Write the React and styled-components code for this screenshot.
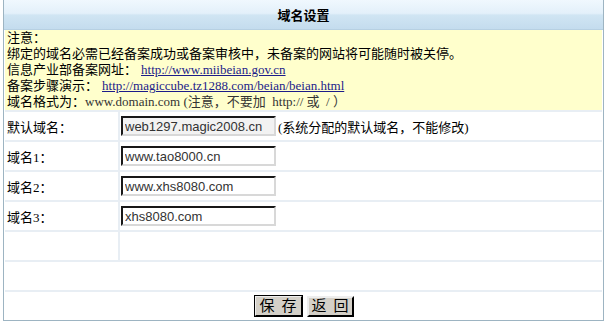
import React, { useState } from 'react'
import styled, { createGlobalStyle } from 'styled-components'

const GlobalStyle = createGlobalStyle`
    body {
        margin:0;
        background:#ffffff;
        font-family:"Liberation Serif", "Noto Sans CJK SC", serif;
        font-size:13px;
        color:#000;
    }
`

const Frame = styled.div`
    margin-left:3px;
    width:599px;
    border:1px solid #9db4c2;
    border-top:none;
    background:#fff;
`

const Header = styled.div`
    height:29px;
    border-bottom:1px solid #b7d0e2;
    background:linear-gradient(#f0f8fe 0%, #e3f0fa 46%, #d0e5f3 52%, #c4dcee 100%);
    display:flex;
    align-items:center;
    justify-content:center;
    font-family:"Noto Sans CJK SC", sans-serif;
    font-weight:bold;
    font-size:13px;
`

const Notice = styled.div`
    background:#ffffcc;
    padding:0 0 0 2px;
    line-height:16px;
    height:80px;
    margin:0 1px;
`

const Link = styled.a`
    color:#1c1c8a;
    text-decoration:underline;
    margin-left:4px;
`

const Muted = styled.span`
    color:#333;
`

const Table = styled.div`
    display:grid;
    grid-template-columns:113px 1fr;
    grid-auto-rows:28px;
    gap:2px;
    padding-top:2px;
    margin:0 1px;
    background:#e8eef4;
`

const Cell = styled.div`
    background:#fff;
    display:flex;
    align-items:center;
    padding-left:${p => p.pad ?? 1}px;
    grid-column:${p => p.wide ? '1 / 3' : 'auto'};
    justify-content:${p => p.center ? 'center' : 'flex-start'};
    gap:4px;
`

const Input = styled.input`
    box-sizing:border-box;
    width:155px;
    height:20px;
    margin:0;
    padding:0 2px;
    border:2px inset #ddd;
    border-top-color:#6d6d6d;
    border-left-color:#6d6d6d;
    border-bottom-color:#d8d8d8;
    border-right-color:#d8d8d8;
    background:${p => p.readOnly ? '#f2f2f2' : '#fff'};
    font-family:"Liberation Sans", Arial, sans-serif;
    font-size:13px;
    color:#333;
    outline:none;
`

const Hint = styled.span`
    margin-left:-2px;
`

const Button = styled.button`
    box-sizing:border-box;
    width:${p => p.primary ? 49 : 47}px;
    height:${p => p.primary ? 22 : 21}px;
    padding:0;
    background:#d4d0c8;
    border:2px outset #eee;
    border-right-color:#404040;
    border-bottom-color:#404040;
    outline:${p => p.primary ? '1px solid #000' : 'none'};
    outline-offset:-1px;
    font-family:"Liberation Sans", "Noto Sans CJK SC", sans-serif;
    font-size:15px;
    word-spacing:3px;
    line-height:16px;
    color:#000;
`

export default function App() {
    const [d1, setD1] = useState("www.tao8000.cn")
    const [d2, setD2] = useState("www.xhs8080.com")
    const [d3, setD3] = useState("xhs8080.com")

    return (
        <>
            <GlobalStyle />
            <Frame>
                <Header>域名设置</Header>
                <Notice>
                    <div>注意：</div>
                    <div>绑定的域名必需已经备案成功或备案审核中，未备案的网站将可能随时被关停。</div>
                    <div>信息产业部备案网址：<Link href="#">http://www.miibeian.gov.cn</Link></div>
                    <div>备案步骤演示：<Link href="#">http://magiccube.tz1288.com/beian/beian.html</Link></div>
                    <div>域名格式为：<Muted>www.domain.com (注意，不要加&nbsp; http:// 或 &nbsp;/ ）</Muted></div>
                </Notice>
                <Table>
                    <Cell pad={2}>默认域名：</Cell>
                    <Cell>
                        <Input readOnly value="web1297.magic2008.cn" />
                        <Hint>(系统分配的默认域名，不能修改)</Hint>
                    </Cell>
                    <Cell pad={2}>域名1：</Cell>
                    <Cell><Input value={d1} onChange={e => setD1(e.target.value)} /></Cell>
                    <Cell pad={2}>域名2：</Cell>
                    <Cell><Input value={d2} onChange={e => setD2(e.target.value)} /></Cell>
                    <Cell pad={2}>域名3：</Cell>
                    <Cell><Input value={d3} onChange={e => setD3(e.target.value)} /></Cell>
                    <Cell></Cell>
                    <Cell></Cell>
                    <Cell wide></Cell>
                    <Cell wide center pad={0}>
                        <Button primary>保 存</Button>
                        <Button>返 回</Button>
                    </Cell>
                </Table>
            </Frame>
        </>
    )
}
